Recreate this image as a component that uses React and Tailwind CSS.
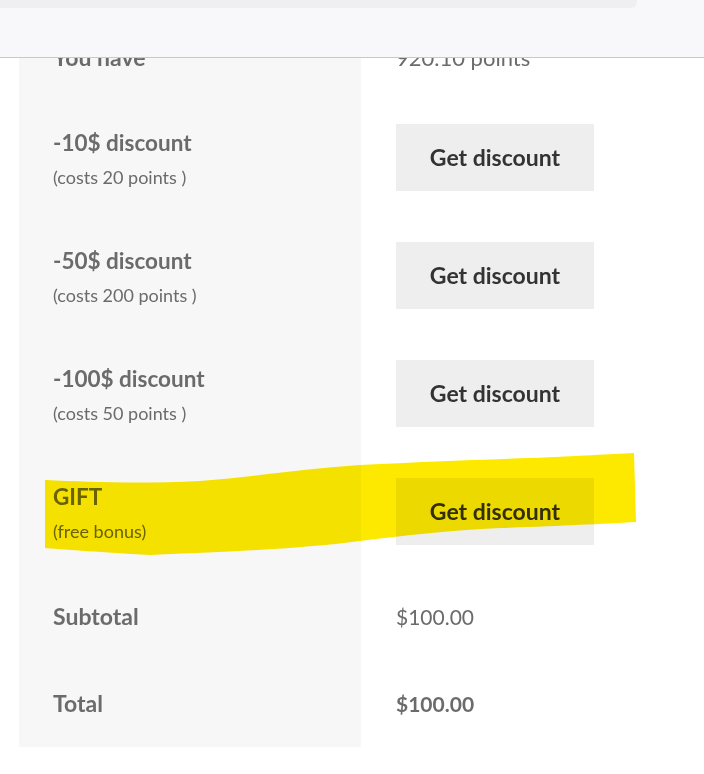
const rows = [
  { label: '-10$ discount', note: '(costs 20 points )' },
  { label: '-50$ discount', note: '(costs 200 points )' },
  { label: '-100$ discount', note: '(costs 50 points )' },
  { label: 'GIFT', note: '(free bonus)' },
];

function Highlight() {
  // the yellow marker stroke someone painted over the GIFT row
  return (
    <svg
      className="absolute left-0 top-0 pointer-events-none mix-blend-multiply"
      width="704"
      height="774"
      viewBox="0 0 704 774"
    >
      <path
        d="M45 480 C90 482 140 484 200 481 C260 476 310 468 360 465 C420 462 470 460 530 458 C580 456 610 454 634 453 L636 522 C600 524 560 526 500 528 C450 530 400 536 360 541 C300 549 220 552 150 555 C100 552 70 550 45 548 Z"
        fill="#fde900"
      />
    </svg>
  );
}

export default function App() {
  return (
    <div className="relative w-[704px] h-[774px] overflow-hidden bg-white font-['Lato',sans-serif]">
      <div className="pt-[14px] pl-[19px]">
        <div className="grid grid-cols-[342px_1fr]">
          <div className="bg-[#f7f7f7] h-[87px] flex items-center px-[34px] text-[23px] font-bold text-[#6b6b6b]">You have</div>
          <div className="h-[87px] flex items-center px-[35px] text-[22px] text-[#6b6b6b]">920.10 points</div>

          {rows.map((r) => (
            <div key={r.label} className="contents">
              <div className="bg-[#f7f7f7] h-[118px] px-[34px] pt-[27px]">
                <div className="text-[22.5px] font-bold text-[#6b6b6b] leading-[30px]">{r.label}</div>
                <div className="text-[18px] text-[#6b6b6b] leading-[26px] mt-[6px]">{r.note}</div>
              </div>
              <div className="h-[118px] px-[35px] pt-[23px]">
                <button className="w-[198px] h-[67px] bg-[#eeeeee] text-[23px] font-bold text-[#333333]">
                  Get discount
                </button>
              </div>
            </div>
          ))}

          <div className="bg-[#f7f7f7] h-[87px] flex items-center px-[34px] text-[23px] font-bold text-[#6b6b6b]">Subtotal</div>
          <div className="h-[87px] flex items-center px-[35px] text-[21px] text-[#6b6b6b]">$100.00</div>
          <div className="bg-[#f7f7f7] h-[87px] flex items-center px-[34px] text-[23px] font-bold text-[#6b6b6b]">Total</div>
          <div className="h-[87px] flex items-center px-[35px] text-[21px] font-bold text-[#6b6b6b]">$100.00</div>
        </div>
      </div>

      <div className="absolute left-0 top-0 w-full h-[58px] bg-[#f8f8fa] border-b border-[#c9c9c9]">
        <div className="w-[637px] h-[8px] bg-[#efeff2] rounded-br-[6px]" />
      </div>

      <Highlight />
    </div>
  );
}
